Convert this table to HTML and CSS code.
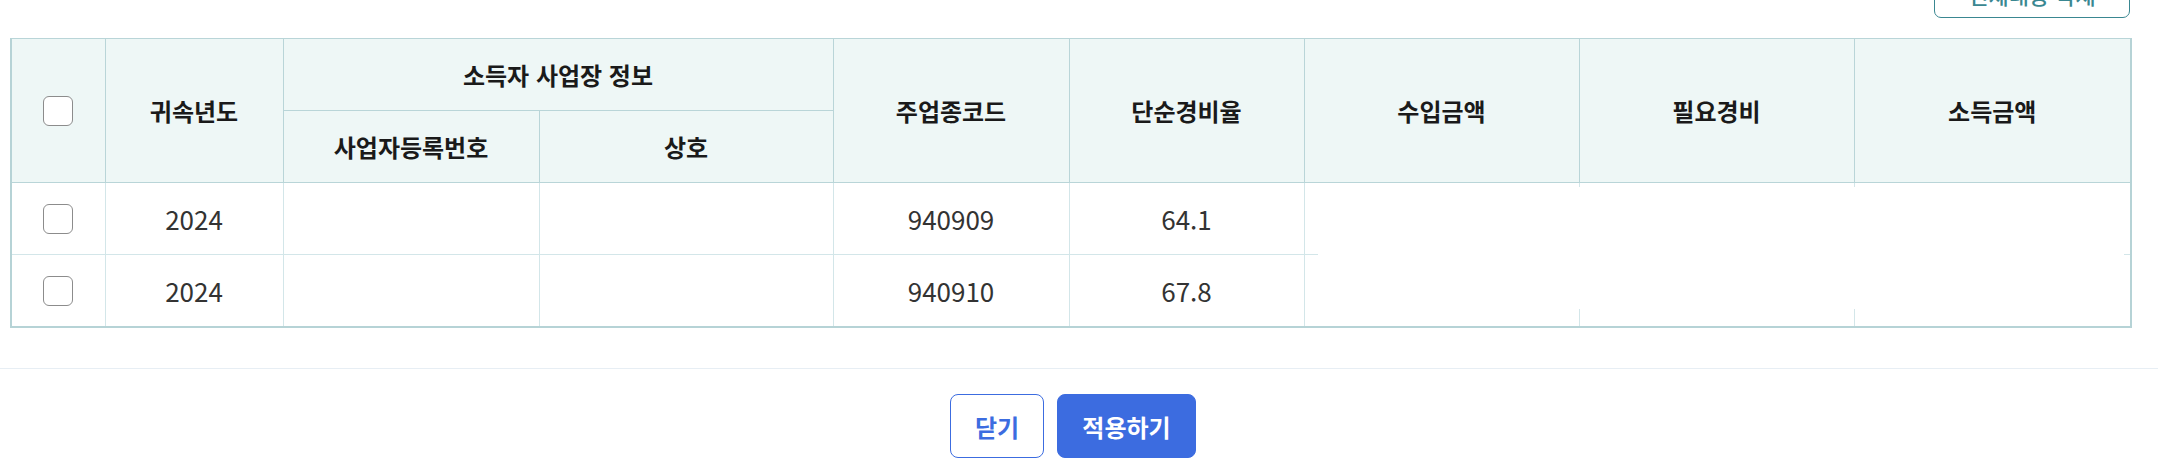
FILE: index.html
```html
<!DOCTYPE html>
<html lang="ko">
<head>
<meta charset="utf-8">
<link rel="stylesheet" href="styles.css">
</head>
<body>
<div class="page">
  <div class="toolbar">
    <button class="btn-outline-teal">전체내용 삭제</button>
  </div>
  <div class="table-wrap">
    <table class="grid">
      <colgroup>
        <col style="width:94px"><col style="width:178px"><col style="width:256px"><col style="width:294px"><col style="width:236px"><col style="width:235px"><col style="width:275px"><col style="width:275px"><col style="width:277px">
      </colgroup>
      <thead>
        <tr>
          <th rowspan="2"><span class="chk"></span></th>
          <th rowspan="2">귀속년도</th>
          <th colspan="2">소득자 사업장 정보</th>
          <th rowspan="2">주업종코드</th>
          <th rowspan="2">단순경비율</th>
          <th rowspan="2">수입금액</th>
          <th rowspan="2">필요경비</th>
          <th rowspan="2">소득금액</th>
        </tr>
        <tr>
          <th>사업자등록번호</th>
          <th>상호</th>
        </tr>
      </thead>
      <tbody>
        <tr>
          <td><span class="chk"></span></td>
          <td>2024</td>
          <td></td>
          <td></td>
          <td>940909</td>
          <td>64.1</td>
          <td></td>
          <td></td>
          <td></td>
        </tr>
        <tr>
          <td><span class="chk"></span></td>
          <td>2024</td>
          <td></td>
          <td></td>
          <td>940910</td>
          <td>67.8</td>
          <td></td>
          <td></td>
          <td></td>
        </tr>
      </tbody>
    </table>
    <div class="cover"></div>
  </div>
  <div class="divider"></div>
  <div class="footer">
    <button class="btn btn-line">닫기</button>
    <button class="btn btn-fill">적용하기</button>
  </div>
</div>
</body>
</html>
```

FILE: styles.css
```css
html, body {
  margin: 0;
  padding: 0;
  background: #fff;
  overflow: hidden;
}
body {
  font-family: "Noto Sans CJK KR", "Noto Sans", sans-serif;
  color: #222;
}
.page {
  display: flex;
  flex-direction: column;
}
.toolbar {
  display: flex;
  justify-content: flex-end;
  padding: 0 28px 0 10px;
  margin-top: -30px;
  margin-bottom: 20px;
}
.btn-outline-teal {
  height: 48px;
  width: 196px;
  border: 1px solid #3a8791;
  border-radius: 7px;
  background: #fff;
  color: #3a8791;
  font-family: inherit;
  font-size: 22px;
  font-weight: 500;
  padding: 0;
}
.table-wrap {
  position: relative;
  margin: 0 28px 0 10px;
  width: 2120px;
}
.grid {
  width: 2120px;
  table-layout: fixed;
  border-collapse: collapse;
  border-top: 1px solid #b6d3d6;
  border-left: 2px solid #b6d3d6;
  border-right: 2px solid #b6d3d6;
  border-bottom: 2px solid #b6d3d6;
}
.grid th {
  background: #eef7f6;
  height: 71px;
  font-size: 24px;
  font-weight: 700;
  color: #1a1a1a;
  border: 1px solid #b9d5d8;
  padding: 0;
  text-align: center;
  vertical-align: middle;
  line-height: 1;
}
.grid td {
  height: 71px;
  font-size: 26px;
  font-weight: 400;
  color: #333;
  border: 1px solid #d3e6e9;
  padding: 0;
  text-align: center;
  vertical-align: middle;
  line-height: 1;
}
.grid tbody tr:first-child td {
  border-top: 1px solid #b6d3d6;
}
.chk {
  display: inline-block;
  width: 28px;
  height: 28px;
  border: 1px solid #8c8c8c;
  border-radius: 6px;
  background: #fff;
  vertical-align: middle;
}
.cover {
  position: absolute;
  left: 1308px;
  top: 149px;
  width: 806px;
  height: 122px;
  background: #fff;
}
.divider {
  margin-top: 40px;
  height: 1px;
  background: #e7eef4;
}
.footer {
  display: flex;
  justify-content: center;
  gap: 13px;
  padding: 25px 12px 0 0;
}
.btn {
  height: 64px;
  border-radius: 8px;
  font-family: inherit;
  font-size: 24px;
  font-weight: 700;
  padding: 0;
}
.btn-line {
  width: 94px;
  background: #fff;
  border: 1px solid #3c6ce0;
  color: #3c6ce0;
}
.btn-fill {
  width: 139px;
  background: #3c6ce0;
  border: 1px solid #3c6ce0;
  color: #fff;
}
```
